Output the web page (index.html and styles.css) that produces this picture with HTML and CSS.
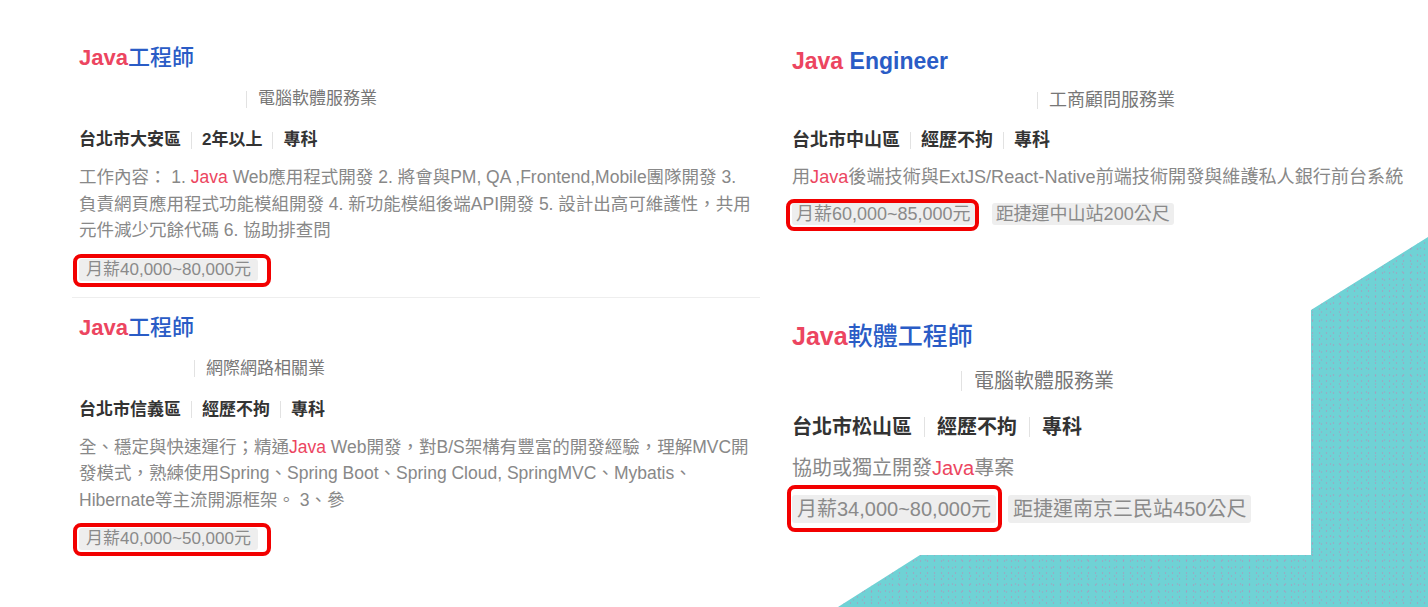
FILE: index.html
```html
<!DOCTYPE html>
<html lang="zh-Hant">
<head>
<meta charset="utf-8">
<title>Java 職缺</title>
<link rel="stylesheet" href="styles.css">
</head>
<body>
<div class="deco"></div>
<main class="board">
  <section class="col col-left">
    <article class="job job-sm">
      <h2 class="job-title"><span class="kw">Java</span>工程師</h2>
      <div class="job-co"><span class="co-name co-a"></span><span class="co-sep"></span><span>電腦軟體服務業</span></div>
      <ul class="job-meta"><li>台北市大安區</li><li>2年以上</li><li>專科</li></ul>
      <p class="job-desc">工作內容： 1. <span class="kw">Java</span> Web應用程式開發 2. 將會與PM, QA ,Frontend,Mobile團隊開發 3. 負責網頁應用程式功能模組開發 4. 新功能模組後端API開發 5. 設計出高可維護性，共用元件減少冗餘代碼 6. 協助排查問</p>
      <div class="job-tags"><span class="tag tag-mark">月薪40,000~80,000元</span></div>
    </article>
    <article class="job job-sm">
      <h2 class="job-title"><span class="kw">Java</span>工程師</h2>
      <div class="job-co"><span class="co-name co-b"></span><span class="co-sep"></span><span>網際網路相關業</span></div>
      <ul class="job-meta"><li>台北市信義區</li><li>經歷不拘</li><li>專科</li></ul>
      <p class="job-desc">全、穩定與快速運行；精通<span class="kw">Java</span> Web開發，對B/S架構有豐富的開發經驗，理解MVC開發模式，熟練使用Spring、Spring Boot、Spring Cloud, SpringMVC、Mybatis、Hibernate等主流開源框架。 3、參</p>
      <div class="job-tags"><span class="tag tag-mark">月薪40,000~50,000元</span></div>
    </article>
  </section>
  <section class="col col-right">
    <article class="job job-md">
      <h2 class="job-title"><span class="kw">Java</span> Engineer</h2>
      <div class="job-co"><span class="co-name co-c"></span><span class="co-sep"></span><span>工商顧問服務業</span></div>
      <ul class="job-meta"><li>台北市中山區</li><li>經歷不拘</li><li>專科</li></ul>
      <p class="job-desc">用<span class="kw">Java</span>後端技術與ExtJS/React-Native前端技術開發與維護私人銀行前台系統</p>
      <div class="job-tags"><span class="tag tag-mark">月薪60,000~85,000元</span><span class="tag">距捷運中山站200公尺</span></div>
    </article>
    <article class="job job-lg">
      <h2 class="job-title"><span class="kw">Java</span>軟體工程師</h2>
      <div class="job-co"><span class="co-name co-d"></span><span class="co-sep"></span><span>電腦軟體服務業</span></div>
      <ul class="job-meta"><li>台北市松山區</li><li>經歷不拘</li><li>專科</li></ul>
      <p class="job-desc">協助或獨立開發<span class="kw">Java</span>專案</p>
      <div class="job-tags"><span class="tag tag-mark">月薪34,000~80,000元</span><span class="tag">距捷運南京三民站450公尺</span></div>
    </article>
  </section>
</main>
</body>
</html>
```
FILE: styles.css
```css
* { box-sizing: border-box; margin: 0; padding: 0; }

body {
  width: 1428px;
  height: 607px;
  overflow: hidden;
  position: relative;
  background: #ffffff;
  font-family: "Liberation Sans", "Noto Sans CJK TC", sans-serif;
  color: #333333;
}

/* decorative teal shape behind the cards */
.deco {
  position: absolute;
  inset: 0;
  z-index: 0;
  background-color: #6fd2d5;
  background-image:
    radial-gradient(rgba(196, 128, 176, 0.45) 0.6px, transparent 1.2px),
    radial-gradient(rgba(196, 128, 176, 0.35) 0.6px, transparent 1.2px);
  background-size: 7px 6px, 9px 8px;
  background-position: 0 0, 3px 4px;
  clip-path: polygon(1428px 237px, 1311px 310px, 1311px 555px, 920px 555px, 838px 607px, 1428px 607px);
}

.board {
  position: relative;
  z-index: 1;
  display: grid;
  grid-template-columns: 688px 1fr;
  column-gap: 32px;
  padding-left: 72px;
}

.col { display: flex; flex-direction: column; }

.job { display: flex; flex-direction: column; align-items: flex-start; }

.job-title {
  font-size: 22px;
  line-height: 30px;
  font-weight: 500;
  color: #2a5cc6;
  white-space: nowrap;
}

.job-title .kw { font-weight: bold; }

.kw { color: #ec4560; }

.job-co {
  display: flex;
  align-items: center;
  margin-top: 14px;
  font-size: 17px;
  line-height: 24px;
  color: #777777;
  white-space: nowrap;
}

.co-name { display: inline-block; height: 1px; }
.co-a { width: 167px; }
.co-b { width: 115px; }
.co-c { width: 245px; }
.co-d { width: 169px; }

.co-sep {
  width: 1px;
  height: 17px;
  background: #e2e2e2;
  margin-right: 11px;
}

.job-meta {
  display: flex;
  align-items: center;
  list-style: none;
  margin-top: 17px;
  font-size: 17px;
  line-height: 24px;
  font-weight: bold;
  color: #333333;
  white-space: nowrap;
}

.job-meta li { display: flex; align-items: center; }

.job-meta li + li::before {
  content: "";
  display: block;
  width: 1px;
  height: 17px;
  background: #e2e2e2;
  margin: 0 10px;
}

.job-desc {
  margin-top: 12px;
  font-size: 17.5px;
  line-height: 26.5px;
  color: #888888;
}

.job-tags {
  display: flex;
  align-items: center;
  gap: 14px;
  margin-top: 15px;
}

.tag {
  display: inline-block;
  height: 22px;
  line-height: 22px;
  padding: 0 7px;
  background: #eeeeee;
  color: #8a8a8a;
  border-radius: 3px;
  font-size: 17px;
  white-space: nowrap;
}

.tag-mark { position: relative; }

.tag-mark::after {
  content: "";
  position: absolute;
  inset: -5px -13px -6px -6px;
  border: 4px solid #f20000;
  border-radius: 8px;
}

/* left column cards */
.job-sm { padding: 0 0 16px 7px; }
.job-sm:first-child { padding-top: 43px; }
.job-sm + .job-sm { border-top: 1px solid #eeeeee; padding-top: 15px; }
.job-sm .job-desc { width: 674px; }

/* right column, first card */
.job-md { padding-top: 46px; }
.job-md .job-title { font-size: 23px; font-weight: bold; }
.job-md .job-co { margin-top: 12px; font-size: 18px; }
.job-md .job-meta { margin-top: 16px; font-size: 18px; }
.job-md .job-desc { font-size: 18.1px; line-height: 26px; }
.job-md .job-tags { margin-top: 13px; gap: 17px; }
.job-md .tag { font-size: 18px; padding: 0 4px; }
.job-md .tag-mark::after { inset: -4px -4px -6px -6px; }

/* right column, second (enlarged) card */
.job-lg { margin-top: 94px; }
.job-lg .job-title { font-size: 25px; line-height: 34px; }
.job-lg .job-co { margin-top: 15px; font-size: 20px; line-height: 26px; }
.job-lg .co-sep { height: 20px; margin-right: 12px; }
.job-lg .job-meta { margin-top: 20px; font-size: 20px; line-height: 26px; }
.job-lg .job-meta li + li::before { height: 20px; margin: 0 12px; }
.job-lg .job-desc { margin-top: 14px; font-size: 20px; line-height: 28px; }
.job-lg .job-tags { margin-top: 13px; gap: 12px; }
.job-lg .tag { font-size: 20px; height: 28px; line-height: 28px; padding: 0 5px; }
.job-lg .tag-mark::after { inset: -10px -6px -9px -5px; }
```
